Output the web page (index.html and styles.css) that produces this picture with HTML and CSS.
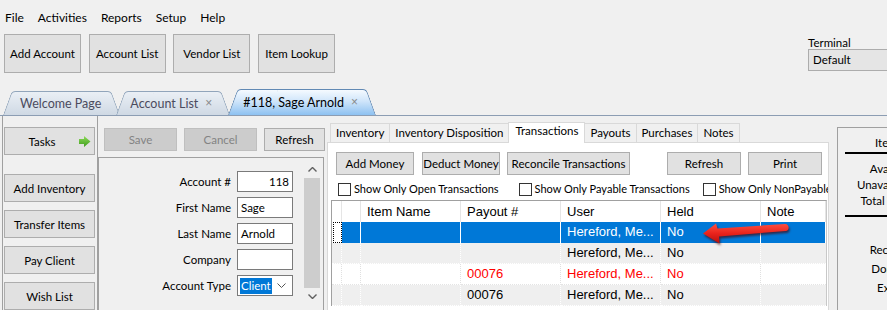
FILE: index.html
```html
<!DOCTYPE html>
<html lang="en">
<head>
    <meta charset="UTF-8">
    <meta name="viewport" content="width=device-width, initial-scale=1.0">
    <title>#118, Sage Arnold</title>
    <link rel="stylesheet" href="styles.css">
</head>
<body>
    <div class="menubar">
        <span>File</span>
        <span>Activities</span>
        <span>Reports</span>
        <span>Setup</span>
        <span>Help</span>
    </div>

    <div class="toolbar">
        <button class="tool-btn">Add Account</button>
        <button class="tool-btn">Account List</button>
        <button class="tool-btn">Vendor List</button>
        <button class="tool-btn">Item Lookup</button>

        <div class="terminal">
            <div class="terminal-label">Terminal</div>
            <div class="terminal-select">Default</div>
        </div>
    </div>

    <div class="doc-tabs">
        <div class="doc-tab tab-welcome">Welcome Page</div>
        <div class="doc-tab tab-list">Account List <span class="tab-close">&times;</span></div>
        <div class="doc-tab active">#118, Sage Arnold <span class="tab-close">&times;</span></div>
    </div>

    <div class="workspace">
        <!-- left task buttons -->
        <div class="task-panel">
            <button class="task-btn tasks">
                <span class="task-text">Tasks</span>
                <svg class="task-arrow" width="12" height="11" viewBox="0 0 12 11">
                    <defs>
                        <linearGradient id="green" x1="0" y1="0" x2="0" y2="1">
                            <stop offset="0" stop-color="#8edc5a"/>
                            <stop offset="1" stop-color="#3f9b1c"/>
                        </linearGradient>
                    </defs>
                    <path d="M0 3 H5 V0 L11.5 5.5 L5 11 V8 H0 Z" fill="url(#green)"/>
                </svg>
            </button>
            <button class="task-btn first">Add Inventory</button>
            <button class="task-btn">Transfer Items</button>
            <button class="task-btn">Pay Client</button>
            <button class="task-btn">Wish List</button>
        </div>

        <!-- account fields -->
        <div class="account-col">
            <div class="account-actions">
                <button class="act-btn" disabled>Save</button>
                <button class="act-btn" disabled>Cancel</button>
                <button class="act-btn refresh">Refresh</button>
            </div>

            <div class="account-box">
                <div class="fields">
                    <label>Account #</label>
                    <div class="field num">118</div>
                    <label>First Name</label>
                    <div class="field">Sage</div>
                    <label>Last Name</label>
                    <div class="field">Arnold</div>
                    <label>Company</label>
                    <div class="field"></div>
                    <label>Account Type</label>
                    <div class="field select">
                        <span class="selected-text">Client</span>
                        <svg width="9" height="5" viewBox="0 0 9 5"><path d="M0.5 0.5 L4.5 4.5 L8.5 0.5" fill="none" stroke="#555" stroke-width="1"/></svg>
                    </div>
                </div>
                <div class="vscroll">
                    <svg class="scroll-arrow" width="9" height="5" viewBox="0 0 9 5"><path d="M0.5 4.5 L4.5 0.5 L8.5 4.5" fill="none" stroke="#606060" stroke-width="1.4"/></svg>
                    <div class="scroll-thumb"></div>
                    <svg class="scroll-arrow" width="9" height="5" viewBox="0 0 9 5"><path d="M0.5 0.5 L4.5 4.5 L8.5 0.5" fill="none" stroke="#606060" stroke-width="1.4"/></svg>
                </div>
            </div>
        </div>

        <!-- detail tabs -->
        <div class="detail-col">
            <div class="sub-tabs">
                <div class="sub-tab">Inventory</div>
                <div class="sub-tab">Inventory Disposition</div>
                <div class="sub-tab active">Transactions</div>
                <div class="sub-tab">Payouts</div>
                <div class="sub-tab">Purchases</div>
                <div class="sub-tab">Notes</div>
            </div>

            <div class="sub-panel">
                <div class="trans-actions">
                    <button class="trans-btn">Add Money</button>
                    <button class="trans-btn">Deduct Money</button>
                    <button class="trans-btn wide">Reconcile Transactions</button>
                    <button class="trans-btn push">Refresh</button>
                    <button class="trans-btn">Print</button>
                </div>

                <div class="filters">
                    <label class="check"><span class="check-box"></span>Show Only Open Transactions</label>
                    <label class="check payable"><span class="check-box"></span>Show Only Payable Transactions</label>
                    <label class="check nonpay"><span class="check-box"></span>Show Only NonPayable</label>
                </div>

                <div class="grid">
                    <div class="grid-row head">
                        <div class="cell rh"></div>
                        <div class="cell"></div>
                        <div class="cell">Item Name</div>
                        <div class="cell">Payout #</div>
                        <div class="cell">User</div>
                        <div class="cell">Held</div>
                        <div class="cell">Note</div>
                    </div>
                    <div class="grid-row selected">
                        <div class="cell rh focus"></div>
                        <div class="cell"></div>
                        <div class="cell"></div>
                        <div class="cell"></div>
                        <div class="cell">Hereford, Me...</div>
                        <div class="cell">No</div>
                        <div class="cell"></div>
                    </div>
                    <div class="grid-row alt">
                        <div class="cell rh"></div>
                        <div class="cell"></div>
                        <div class="cell"></div>
                        <div class="cell"></div>
                        <div class="cell">Hereford, Me...</div>
                        <div class="cell">No</div>
                        <div class="cell"></div>
                    </div>
                    <div class="grid-row held">
                        <div class="cell rh"></div>
                        <div class="cell"></div>
                        <div class="cell"></div>
                        <div class="cell">00076</div>
                        <div class="cell">Hereford, Me...</div>
                        <div class="cell">No</div>
                        <div class="cell"></div>
                    </div>
                    <div class="grid-row alt">
                        <div class="cell rh"></div>
                        <div class="cell"></div>
                        <div class="cell"></div>
                        <div class="cell">00076</div>
                        <div class="cell">Hereford, Me...</div>
                        <div class="cell">No</div>
                        <div class="cell"></div>
                    </div>

                    <!-- annotation arrow pointing at the Held value -->
                    <svg class="callout" width="95" height="30" viewBox="0 0 95 30">
                        <defs>
                            <linearGradient id="red" x1="0" y1="0" x2="0" y2="1">
                                <stop offset="0" stop-color="#ff5040"/>
                                <stop offset="0.5" stop-color="#e8231c"/>
                                <stop offset="1" stop-color="#b80f0c"/>
                            </linearGradient>
                        </defs>
                        <path d="M3 13.5 L16 3.5 L17.5 8.5 L85 4 C89.5 3.8 90 10.8 85.5 11 L19 16.5 L19.5 23.5 Z" fill="url(#red)"/>
                    </svg>
                </div>
            </div>
        </div>

        <!-- item summary, cut off by the window edge -->
        <div class="summary">
            <div class="summary-inner">
                <div class="summary-title">Items Summary</div>
                <div class="summary-rule"></div>
                <div class="summary-rows">
                    <span>Available:</span><span>14</span>
                    <span>Unavailable:</span><span>2</span>
                    <span>Total Value:</span><span>$312.00</span>
                </div>
                <div class="summary-rule"></div>
                <div class="summary-rows tall">
                    <span>Received:</span><span>16</span>
                    <span>Donated:</span><span>0</span>
                    <span>Expired:</span><span>0</span>
                </div>
            </div>
        </div>
    </div>
</body>
</html>
```

FILE: styles.css
```css
* {
    box-sizing: border-box;
}

body {
    margin: 0;
    width: 887px;
    height: 310px;
    overflow: hidden;
    background: #f0f0f0;
    font-family: Lato, "Noto Sans", sans-serif;
    font-size: 11.5px;
    color: #000;
}

button {
    font: inherit;
    color: inherit;
    margin: 0;
    padding: 0;
    white-space: nowrap;
    background: #e1e1e1;
    border: 1px solid #adadad;
    border-radius: 0;
}

button:disabled {
    background: #cccccc;
    border-color: #bfbfbf;
    color: #838383;
}

/* menu + toolbar */
.menubar {
    display: flex;
    gap: 14px;
    height: 28px;
    padding: 8px 0 0 5px;
    line-height: 20px;
    font-size: 12px;
}

.toolbar {
    display: flex;
    align-items: flex-start;
    gap: 7.7px;
    height: 39px;
    margin-top: 6px;
    padding-left: 4px;
}

.tool-btn {
    width: 77px;
    height: 39px;
}

.terminal {
    margin-left: auto;
    width: 79px;
    flex: none;
}

.terminal-label {
    height: 15px;
    line-height: 15px;
    margin-top: 1px;
}

.terminal-select {
    height: 22px;
    margin-top: -1px;
    padding-left: 4px;
    line-height: 20px;
    background: #e5e5e5;
    border: 1px solid #acacac;
    border-right: none;
}

/* document tabs */
.doc-tabs {
    display: flex;
    align-items: flex-end;
    height: 27px;
    margin-top: 16px;
    padding-left: 3px;
    border-bottom: 1px solid #8c9db3;
}

.doc-tab {
    position: relative;
    z-index: 1;
    display: flex;
    align-items: center;
    height: 24px;
    padding: 0 18px 0 17px;
    font-size: 12.5px;
    color: #4b4b5e;
    white-space: nowrap;
}

.doc-tab::before,
.doc-tab::after {
    content: "";
    position: absolute;
    z-index: -1;
    top: 0;
    bottom: 0;
    width: 60%;
    background: linear-gradient(#eaeff5, #cfd9e4);
    border: 1px solid #91a5bb;
    border-bottom: none;
    transform-origin: bottom;
}

.doc-tab::before {
    left: 0;
    border-right: none;
    border-radius: 4px 0 0 0;
    transform: skewX(-20deg);
}

.doc-tab::after {
    right: 0;
    border-left: none;
    border-radius: 0 4px 0 0;
    transform: skewX(20deg);
}

.tab-list {
    z-index: 2;
    margin-left: -3px;
    padding-left: 14px;
}

.doc-tab.active {
    z-index: 3;
    height: 26px;
    margin-left: -2px;
    padding-left: 15px;
    color: #000;
}

.doc-tab.active::before,
.doc-tab.active::after {
    background: linear-gradient(#f5faff, #cfe5fa 45%, #8dc1f1);
    border-color: #6189b4;
}

.tab-close {
    margin-left: 7px;
    color: #8a8a8a;
    font-family: "Liberation Sans", Arial, sans-serif;
    font-size: 12px;
}

/* workspace */
.workspace {
    display: flex;
    height: 194px;
}

.task-panel {
    flex: none;
    width: 96px;
    margin-left: 2px;
    padding: 11px 0 0 1px;
    border-left: 1px solid #a0a0a0;
    border-right: 1px solid #a0a0a0;
    display: flex;
    flex-direction: column;
    gap: 8px;
}

.task-btn {
    width: 91px;
    height: 28px;
    flex: none;
}

.task-btn.tasks {
    display: flex;
    align-items: center;
}

.task-text {
    flex: 1;
    text-align: center;
}

.task-arrow {
    margin-right: 3px;
}

.task-btn.first {
    margin-top: 11px;
}

.account-col {
    flex: none;
    width: 229px;
    display: flex;
    flex-direction: column;
}

.account-actions {
    display: flex;
    gap: 7px;
    margin-top: 12px;
    padding-left: 6px;
}

.act-btn {
    width: 73px;
    height: 23px;
}

.act-btn.refresh {
    width: 61px;
}

.account-box {
    flex: 1;
    display: flex;
    width: 226px;
    margin-top: 6px;
    border: 1px solid #a0a0a0;
    border-bottom: none;
}

.fields {
    flex: 1;
    display: grid;
    grid-template-columns: 132px 56px;
    grid-auto-rows: 21px;
    column-gap: 6px;
    row-gap: 5px;
    align-content: start;
    padding-top: 13px;
}

.fields label {
    text-align: right;
    line-height: 21px;
}

.field {
    background: #fff;
    border: 1px solid #7a7a7a;
    line-height: 19px;
    padding: 0 3px;
}

.field.num {
    text-align: right;
}

.field.select {
    display: flex;
    align-items: center;
    justify-content: space-between;
    padding: 0 6px 0 2px;
}

.selected-text {
    background: #0078d7;
    color: #fff;
    line-height: 16px;
    padding: 0 1px;
}

.vscroll {
    flex: none;
    width: 16px;
    margin: 3px 3px 0 0;
    display: flex;
    flex-direction: column;
    align-items: center;
    background: #f0f0f0;
}

.scroll-arrow {
    margin: 6px 0;
}

.scroll-thumb {
    width: 16px;
    height: 110px;
    background: #cdcdcd;
}

/* transactions */
.detail-col {
    flex: none;
    width: 502px;
    display: flex;
    flex-direction: column;
}

.sub-tabs {
    display: flex;
    align-items: flex-end;
    height: 20px;
    margin-top: 6px;
    padding-left: 3px;
}

.sub-tab {
    height: 19px;
    line-height: 17px;
    padding: 0 5px;
    margin-right: -1px;
    background: #f0f0f0;
    border: 1px solid #d9d9d9;
    border-bottom: none;
    white-space: nowrap;
}

.sub-tab.active {
    position: relative;
    z-index: 1;
    height: 21px;
    margin-bottom: -1px;
    padding: 0 6px;
    line-height: 16px;
    background: #fff;
}

.sub-panel {
    flex: 1;
    background: #fff;
    border: 1px solid #d9d9d9;
    border-bottom: none;
    padding: 9px 0 0 3px;
    overflow: hidden;
}

.trans-actions {
    display: flex;
    gap: 7px;
    margin-left: 5px;
    padding-right: 6px;
}

.trans-btn {
    width: 78px;
    height: 23px;
}

.trans-btn:first-child {
    margin-right: 1px;
}

.trans-btn.wide {
    width: 123px;
}

.trans-btn.push {
    margin-left: auto;
    width: 74px;
}

.trans-btn.push + .trans-btn {
    width: 74px;
}

.filters {
    display: flex;
    height: 14px;
    margin: 7px 0 0 7px;
    font-size: 11px;
    line-height: 14px;
    white-space: nowrap;
}

.check {
    display: flex;
    align-items: center;
    flex: none;
}

.check.payable {
    margin-left: 20px;
}

.check.nonpay {
    margin-left: 13px;
}

.check-box {
    width: 13px;
    height: 13px;
    margin-right: 3px;
    background: #fff;
    border: 1px solid #333;
}

.grid {
    position: relative;
    margin: 4px 1px 0 0;
    border-top: 1px solid #a0a0a0;
    border-left: 1px solid #a0a0a0;
    border-right: 1px solid #c8c8c8;
    font-family: "Liberation Sans", Arial, sans-serif;
    font-size: 13px;
}

.grid-row {
    display: grid;
    grid-template-columns: 10px 19px 100px 100px 100px 100px 1fr;
    height: 21px;
    line-height: 20px;
}

.cell {
    padding-left: 6px;
    white-space: nowrap;
    overflow: hidden;
    border-right: 1px dotted #e0e0e0;
    border-bottom: 1px dotted #e4e4e4;
}

.cell:last-child {
    border-right: none;
}

.head .cell {
    background: #fff;
    border-right: 1px solid #e5e5e5;
    border-bottom: none;
    line-height: 21px;
}

.selected .cell {
    background: #0078d7;
    color: #fff;
    border-right: 1px solid #ffffff;
    border-bottom: none;
}

.selected .cell.rh {
    background: #fff;
    border-right: none;
}

.cell.focus {
    position: relative;
}

.cell.focus::after {
    content: "";
    position: absolute;
    inset: 0 0 0 1px;
    border: 1px dotted #000;
}

.alt .cell {
    background: #efefef;
    border-right-color: #ffffff;
    border-bottom-color: #ffffff;
}

.held .cell {
    color: #ff0000;
}

.callout {
    position: absolute;
    left: 368px;
    top: 19px;
    filter: drop-shadow(1px 2px 1px rgba(70, 0, 0, 0.65));
}

/* summary: only its left edge fits in the window */
.summary {
    flex: 1;
    min-width: 0;
    margin: 11px 0 0 8px;
    border-top: 1px solid #a0a0a0;
    border-left: 1px solid #a0a0a0;
    overflow: hidden;
}

.summary-inner {
    width: 200px;
    padding-top: 7px;
}

.summary-title {
    height: 16px;
    line-height: 16px;
    padding-left: 37px;
    white-space: nowrap;
}

.summary-rule {
    height: 2px;
    margin: 1px 0 0 7px;
    background: #000;
}

.summary-rows {
    display: grid;
    grid-template-columns: 80px auto;
    grid-auto-rows: 16px;
    column-gap: 6px;
    margin: 7px 0 6px;
    line-height: 16px;
    white-space: nowrap;
}

.summary-rows span:nth-child(odd) {
    text-align: right;
}

.summary-rows.tall {
    grid-auto-rows: 19px;
    line-height: 19px;
    margin-top: 23px;
}
```
